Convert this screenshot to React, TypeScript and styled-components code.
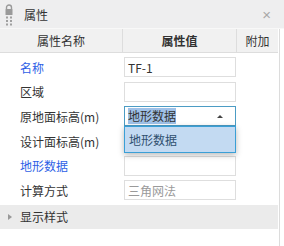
import styled, { createGlobalStyle } from 'styled-components';

const GlobalStyle = createGlobalStyle`
  html, body {
    margin: 0;
    padding: 0;
    background: #ffffff;
  }
  body {
    font-family: "Noto Sans CJK SC", "Liberation Sans", sans-serif;
    font-size: 12px;
    color: #333333;
  }
`;

type Row = {
  label: string;
  link?: boolean;
  value?: string;
  placeholder?: string;
  select?: boolean;
};

const rows: Row[] = [
  { label: '名称', link: true, value: 'TF-1' },
  { label: '区域', value: '' },
  { label: '原地面标高(m)', select: true, value: '地形数据' },
  { label: '设计面标高(m)', value: '' },
  { label: '地形数据', link: true, value: '' },
  { label: '计算方式', placeholder: '三角网法' },
];

const LockIcon = () => (
  <svg width="10" height="22" viewBox="0 0 10 22">
    <path d="M2.5 5 V3.5 a2.5 2.5 0 0 1 5 0 V5" fill="none" stroke="#9a9a9a" strokeWidth="1.4" />
    <rect x="1.5" y="5" width="7" height="6" rx="0.5" fill="#9a9a9a" />
    {[13.5, 17, 20.5].map((y) => (
      <g key={y}>
        <rect x="2" y={y - 1} width="2" height="2" fill="#a0a0a0" />
        <rect x="6" y={y - 1} width="2" height="2" fill="#a0a0a0" />
      </g>
    ))}
  </svg>
);

const App: React.FC = () => {
  return (
    <>
      <GlobalStyle />
      <Panel>
        <TitleBar>
          <Grip><LockIcon /></Grip>
          <Title>属性</Title>
          <Close>×</Close>
        </TitleBar>
        <Body>
          <Header>
            <HeadCell>属性名称</HeadCell>
            <HeadCell bold>属性值</HeadCell>
            <HeadCell last>附加</HeadCell>
          </Header>
          <Rows>
            {rows.map((r, idx) => (
              <RowWrap key={`row-${idx}`}>
                <Label $link={r.link}>{r.label}</Label>
                <ValueCell>
                  {r.select ? (
                    <SelectBox>
                      <Selected>{r.value}</Selected>
                      <Arrow />
                      <DropList>
                        <DropItem>地形数据</DropItem>
                      </DropList>
                    </SelectBox>
                  ) : (
                    <Field>
                      {r.value ? r.value : <Placeholder>{r.placeholder}</Placeholder>}
                    </Field>
                  )}
                </ValueCell>
                <div />
              </RowWrap>
            ))}
          </Rows>
          <Group>
            <Caret />
            <GroupText>显示样式</GroupText>
          </Group>
        </Body>
      </Panel>
    </>
  );
};

const Panel = styled.div`
  width: 284px;
  height: 246px;
  display: flex;
  flex-direction: column;
  overflow: hidden;
`;

const TitleBar = styled.div`
  height: 29px;
  flex: none;
  display: flex;
  align-items: center;
  background: #eeeeef;
  border-bottom: 1px solid #f8f8f8;
  box-sizing: border-box;
`;

const Grip = styled.div`
  width: 10px;
  height: 22px;
  margin: 2px 0 0 4px;
  display: flex;
`;

const Title = styled.div`
  margin-left: 10px;
  color: #333333;
  font-size: 12px;
`;

const Close = styled.div`
  margin-left: auto;
  margin-right: 13px;
  color: #a8a8a8;
  font-size: 15px;
  font-family: "Liberation Sans", sans-serif;
  line-height: 1;
`;

const Body = styled.div`
  flex: 1;
  width: 280px;
  border-right: 1px solid #dcdcdc;
  box-sizing: border-box;
  padding-right: 2px;
`;

const Header = styled.div`
  display: grid;
  grid-template-columns: 123px 114px 41px;
`;

const HeadCell = styled.div<{ bold?: boolean; last?: boolean }>`
  height: 24px;
  display: flex;
  align-items: center;
  justify-content: center;
  background: #f1f1f1;
  border-bottom: 1px solid #dddddd;
  border-right: ${(p) => (p.last ? 'none' : '1px solid #dddddd')};
  box-sizing: border-box;
  font-weight: ${(p) => (p.bold ? 'bold' : 'normal')};
  color: #333333;
`;

const Rows = styled.div`
  display: grid;
  grid-template-columns: 123px 114px 41px;
  grid-auto-rows: 24.6px;
  padding-top: 2px;
`;

const RowWrap = styled.div`
  display: contents;
`;

const Label = styled.div<{ $link?: boolean }>`
  display: flex;
  align-items: center;
  padding-left: 20px;
  color: ${(p) => (p.$link ? '#2e5fe6' : '#333333')};
`;

const ValueCell = styled.div`
  display: flex;
  align-items: center;
  padding-left: 1px;
`;

const Field = styled.div`
  width: 112px;
  height: 20px;
  border: 1px solid #dedede;
  box-sizing: border-box;
  display: flex;
  align-items: center;
  padding-left: 3px;
  color: #333333;
`;

const Placeholder = styled.span`
  color: #9a9a9a;
`;

const SelectBox = styled.div`
  position: relative;
  width: 112px;
  height: 20px;
  border: 1px solid #4c9cc4;
  box-sizing: border-box;
  display: flex;
  align-items: center;
  padding-left: 3px;
`;

const Selected = styled.span`
  background: #9fc1e8;
  color: #333333;
  line-height: 16px;
`;

const Arrow = styled.span`
  position: absolute;
  right: 12px;
  top: 8px;
  width: 0;
  height: 0;
  border-left: 3px solid transparent;
  border-right: 3px solid transparent;
  border-bottom: 3px solid #444444;
`;

const DropList = styled.div`
  position: absolute;
  left: -1px;
  top: 19px;
  width: 112px;
  height: 27px;
  box-sizing: border-box;
  background: #c3daf2;
  border: 1px solid #3a9fd6;
  box-shadow: 0 2px 6px rgba(0, 0, 0, 0.28);
  z-index: 2;
`;

const DropItem = styled.div`
  height: 25px;
  display: flex;
  align-items: center;
  padding-left: 4px;
  color: #2f4f6f;
`;

const Group = styled.div`
  margin-top: 2px;
  height: 24px;
  width: 278px;
  display: flex;
  align-items: center;
  background: #ebebeb;
`;

const Caret = styled.span`
  margin-left: 8px;
  width: 0;
  height: 0;
  border-top: 3px solid transparent;
  border-bottom: 3px solid transparent;
  border-left: 4px solid #999999;
`;

const GroupText = styled.span`
  margin-left: 8px;
  color: #333333;
`;

export default App;
